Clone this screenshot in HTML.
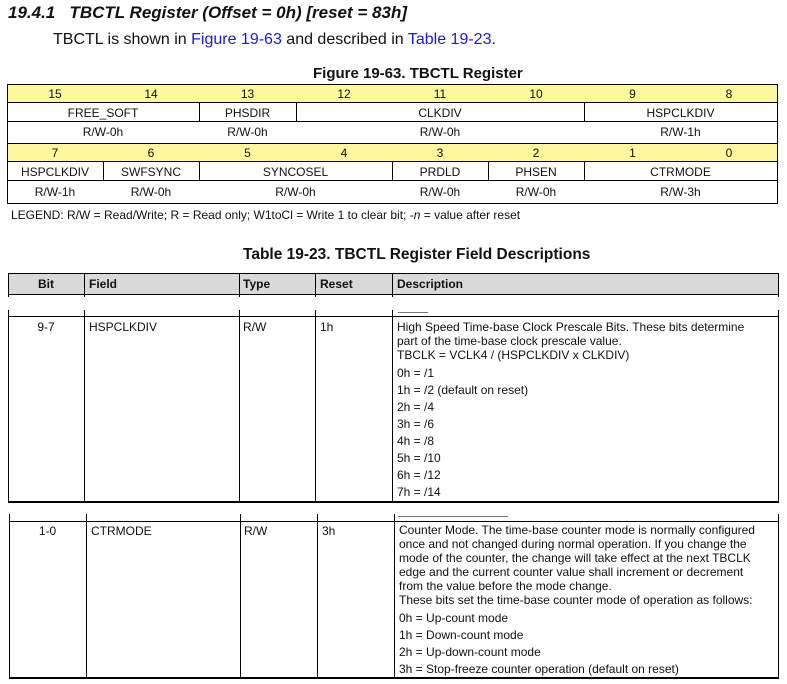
<!DOCTYPE html>
<html><head><meta charset="utf-8"><style>
*{margin:0;padding:0;box-sizing:border-box}
body{width:787px;height:684px;background:#fff;position:relative;font-family:"Liberation Sans",Arial,sans-serif;color:#111;overflow:hidden}
.a{position:absolute;white-space:nowrap}
.c{position:absolute;text-align:center;font-size:12px;line-height:1}
.h{position:absolute;background:#000}
.y{position:absolute;background:#fdf79d}
.g{position:absolute;background:#d9d9d9}
a{color:#1a1adc;text-decoration:none}
.t{font-size:12px;position:absolute;white-space:nowrap}
</style></head><body>
<div class="a" style="left:8px;top:3px;font-size:17px;font-weight:bold;font-style:italic">19.4.1&nbsp;&nbsp; TBCTL Register (Offset = 0h) [reset = 83h]</div>
<div class="a" style="left:53px;top:31px;font-size:16px">TBCTL is shown in <a>Figure 19-63</a> and described in <a>Table 19-23</a>.</div>
<div class="a" style="left:313px;top:65px;font-size:15px;font-weight:bold">Figure 19-63. TBCTL Register</div>

<!-- register table -->
<div class="y" style="left:7px;top:85px;width:770px;height:17px"></div>
<div class="y" style="left:7px;top:144px;width:770px;height:17px"></div>
<div class="h" style="left:7px;top:84px;width:771px;height:1px"></div>
<div class="h" style="left:7px;top:102px;width:771px;height:1px"></div>
<div class="h" style="left:7px;top:121px;width:771px;height:1px"></div>
<div class="h" style="left:7px;top:143px;width:771px;height:1px"></div>
<div class="h" style="left:7px;top:161px;width:771px;height:1px"></div>
<div class="h" style="left:7px;top:180px;width:771px;height:1px"></div>
<div class="h" style="left:7px;top:203px;width:771px;height:1px"></div>
<div class="h" style="left:7px;top:84px;width:1px;height:120px"></div>
<div class="h" style="left:777px;top:84px;width:1px;height:120px"></div>
<div class="h" style="left:199px;top:102px;width:1px;height:19px"></div>
<div class="h" style="left:296px;top:102px;width:1px;height:19px"></div>
<div class="h" style="left:584px;top:102px;width:1px;height:19px"></div>
<div class="h" style="left:103px;top:161px;width:1px;height:19px"></div>
<div class="h" style="left:199px;top:161px;width:1px;height:19px"></div>
<div class="h" style="left:392px;top:161px;width:1px;height:19px"></div>
<div class="h" style="left:488px;top:161px;width:1px;height:19px"></div>
<div class="h" style="left:584px;top:161px;width:1px;height:19px"></div>

<div class="c" style="left:7px;width:96px;top:88px">15</div>
<div class="c" style="left:103px;width:96px;top:88px">14</div>
<div class="c" style="left:199px;width:97px;top:88px">13</div>
<div class="c" style="left:296px;width:96px;top:88px">12</div>
<div class="c" style="left:392px;width:96px;top:88px">11</div>
<div class="c" style="left:488px;width:96px;top:88px">10</div>
<div class="c" style="left:584px;width:97px;top:88px">9</div>
<div class="c" style="left:681px;width:96px;top:88px">8</div>
<div class="c" style="left:7px;width:192px;top:107px">FREE_SOFT</div>
<div class="c" style="left:199px;width:97px;top:107px">PHSDIR</div>
<div class="c" style="left:296px;width:288px;top:107px">CLKDIV</div>
<div class="c" style="left:584px;width:193px;top:107px">HSPCLKDIV</div>
<div class="c" style="left:7px;width:192px;top:126px">R/W-0h</div>
<div class="c" style="left:199px;width:97px;top:126px">R/W-0h</div>
<div class="c" style="left:296px;width:288px;top:126px">R/W-0h</div>
<div class="c" style="left:584px;width:193px;top:126px">R/W-1h</div>

<div class="c" style="left:7px;width:96px;top:147px">7</div>
<div class="c" style="left:103px;width:96px;top:147px">6</div>
<div class="c" style="left:199px;width:97px;top:147px">5</div>
<div class="c" style="left:296px;width:96px;top:147px">4</div>
<div class="c" style="left:392px;width:96px;top:147px">3</div>
<div class="c" style="left:488px;width:96px;top:147px">2</div>
<div class="c" style="left:584px;width:97px;top:147px">1</div>
<div class="c" style="left:681px;width:96px;top:147px">0</div>
<div class="c" style="left:7px;width:96px;top:166px">HSPCLKDIV</div>
<div class="c" style="left:103px;width:96px;top:166px">SWFSYNC</div>
<div class="c" style="left:199px;width:193px;top:166px">SYNCOSEL</div>
<div class="c" style="left:392px;width:96px;top:166px">PRDLD</div>
<div class="c" style="left:488px;width:96px;top:166px">PHSEN</div>
<div class="c" style="left:584px;width:193px;top:166px">CTRMODE</div>
<div class="c" style="left:7px;width:96px;top:186px">R/W-1h</div>
<div class="c" style="left:103px;width:96px;top:186px">R/W-0h</div>
<div class="c" style="left:199px;width:193px;top:186px">R/W-0h</div>
<div class="c" style="left:392px;width:96px;top:186px">R/W-0h</div>
<div class="c" style="left:488px;width:96px;top:186px">R/W-0h</div>
<div class="c" style="left:584px;width:193px;top:186px">R/W-3h</div>

<div class="a" style="left:11px;top:208px;font-size:12px">LEGEND: R/W = Read/Write; R = Read only; W1toCl = Write 1 to clear bit; -<i>n</i> = value after reset</div>

<div class="a" style="left:243px;top:246px;font-size:15.5px;font-weight:bold">Table 19-23. TBCTL Register Field Descriptions</div>

<!-- field table header -->
<div class="g" style="left:8px;top:274px;width:770px;height:20px"></div>
<div class="h" style="left:8px;top:273px;width:771px;height:1px"></div>
<div class="h" style="left:8px;top:294px;width:771px;height:1px"></div>
<div class="t" style="left:8px;width:76px;text-align:center;top:277px;font-weight:bold">Bit</div>
<div class="t" style="left:89px;top:277px;font-weight:bold">Field</div>
<div class="t" style="left:243px;top:277px;font-weight:bold">Type</div>
<div class="t" style="left:320px;top:277px;font-weight:bold">Reset</div>
<div class="t" style="left:397px;top:277px;font-weight:bold">Description</div>
<div class="h" style="left:8px;top:273px;width:1px;height:24px"></div>
<div class="h" style="left:84px;top:273px;width:1px;height:24px"></div>
<div class="h" style="left:239px;top:273px;width:1px;height:24px"></div>
<div class="h" style="left:315px;top:273px;width:1px;height:24px"></div>
<div class="h" style="left:392px;top:273px;width:1px;height:24px"></div>
<div class="h" style="left:778px;top:273px;width:1px;height:24px"></div>
<div class="h" style="left:398px;top:312px;width:30px;height:1px;background:#777"></div>

<!-- row 9-7 -->
<div class="h" style="left:8px;top:316px;width:771px;height:1px"></div>
<div class="h" style="left:8px;top:501px;width:771px;height:2px"></div>
<div class="h" style="left:8px;top:310px;width:1px;height:192px"></div>
<div class="h" style="left:84px;top:310px;width:1px;height:192px"></div>
<div class="h" style="left:239px;top:310px;width:1px;height:192px"></div>
<div class="h" style="left:315px;top:310px;width:1px;height:192px"></div>
<div class="h" style="left:392px;top:310px;width:1px;height:192px"></div>
<div class="h" style="left:778px;top:310px;width:1px;height:192px"></div>
<div class="t" style="left:8px;width:76px;text-align:center;top:320px">9-7</div>
<div class="t" style="left:89px;top:320px">HSPCLKDIV</div>
<div class="t" style="left:243px;top:320px">R/W</div>
<div class="t" style="left:320px;top:320px">1h</div>
<div class="t" style="left:397px;top:320px;line-height:14px">High Speed Time-base Clock Prescale Bits. These bits determine<br>part of the time-base clock prescale value.<br>TBCLK = VCLK4 / (HSPCLKDIV x CLKDIV)</div>
<div class="t" style="left:397px;top:365px;line-height:17px">0h = /1<br>1h = /2 (default on reset)<br>2h = /4<br>3h = /6<br>4h = /8<br>5h = /10<br>6h = /12<br>7h = /14</div>

<!-- row 1-0 -->
<div class="h" style="left:398px;top:516px;width:110px;height:1px;background:#777"></div>
<div class="h" style="left:9px;top:521px;width:770px;height:1px"></div>
<div class="h" style="left:9px;top:677px;width:770px;height:2px"></div>
<div class="h" style="left:9px;top:514px;width:1px;height:164px"></div>
<div class="h" style="left:86px;top:514px;width:1px;height:164px"></div>
<div class="h" style="left:240px;top:514px;width:1px;height:164px"></div>
<div class="h" style="left:317px;top:514px;width:1px;height:164px"></div>
<div class="h" style="left:394px;top:514px;width:1px;height:164px"></div>
<div class="h" style="left:778px;top:514px;width:1px;height:164px"></div>
<div class="t" style="left:9px;width:77px;text-align:center;top:524px">1-0</div>
<div class="t" style="left:91px;top:524px">CTRMODE</div>
<div class="t" style="left:244px;top:524px">R/W</div>
<div class="t" style="left:322px;top:524px">3h</div>
<div class="t" style="left:399px;top:524px;line-height:13.9px">Counter Mode. The time-base counter mode is normally configured<br>once and not changed during normal operation. If you change the<br>mode of the counter, the change will take effect at the next TBCLK<br>edge and the current counter value shall increment or decrement<br>from the value before the mode change.<br>These bits set the time-base counter mode of operation as follows:</div>
<div class="t" style="left:399px;top:610px;line-height:17px">0h = Up-count mode<br>1h = Down-count mode<br>2h = Up-down-count mode<br>3h = Stop-freeze counter operation (default on reset)</div>
</body></html>
